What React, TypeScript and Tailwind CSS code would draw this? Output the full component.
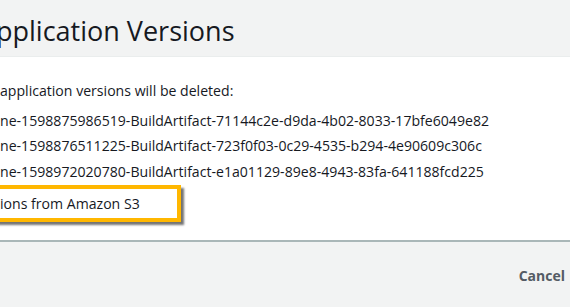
import React from 'react'

const versions = [
    "ne-1598875986519-BuildArtifact-71144c2e-d9da-4b02-8033-17bfe6049e82",
    "ne-1598876511225-BuildArtifact-723f0f03-0c29-4535-b294-4e90609c306c",
    "ne-1598972020780-BuildArtifact-e1a01129-89e8-4943-83fa-641188fcd225",
];

export default function App() {
    return (
        <div className="w-[570px] h-[307px] overflow-hidden bg-white flex flex-col font-['Open_Sans',sans-serif] text-[#16191f]">
            {/* Header */}
            <div className="h-[57px] shrink-0 bg-[#f2f3f3] border-b border-[#eaeded] flex items-center pt-[5px]">
                <h2 className="text-[27px] leading-none -ml-[4px] whitespace-nowrap">pplication Versions</h2>
            </div>

            {/* Body */}
            <div className="h-[183px] shrink-0 pt-[21px] text-[14.1px] leading-[25.5px]">
                <p className="whitespace-nowrap">application versions will be deleted:</p>
                <ul className="mt-[4px]">
                    {versions.map((v) => (
                        <li key={v} className="whitespace-nowrap">{v}</li>
                    ))}
                </ul>
                {/* Checkbox row (highlighted) */}
                <div className="-ml-[8px] mt-[1px] w-[189px] h-[37px] border-[4px] border-[#ffb700] pl-[4px] shadow-[3px_3px_2px_rgba(0,0,0,0.55)] flex items-center">
                    <span className="whitespace-nowrap">ions from Amazon S3</span>
                </div>
            </div>

            {/* Footer */}
            <div className="flex-1 bg-[#f2f3f3] border-t-2 border-[#aab7b8] flex items-center justify-end pr-[5px] pt-[2px]">
                <button className="text-[14px] font-bold text-[#545b64]">Cancel</button>
            </div>
        </div>
    )
}
